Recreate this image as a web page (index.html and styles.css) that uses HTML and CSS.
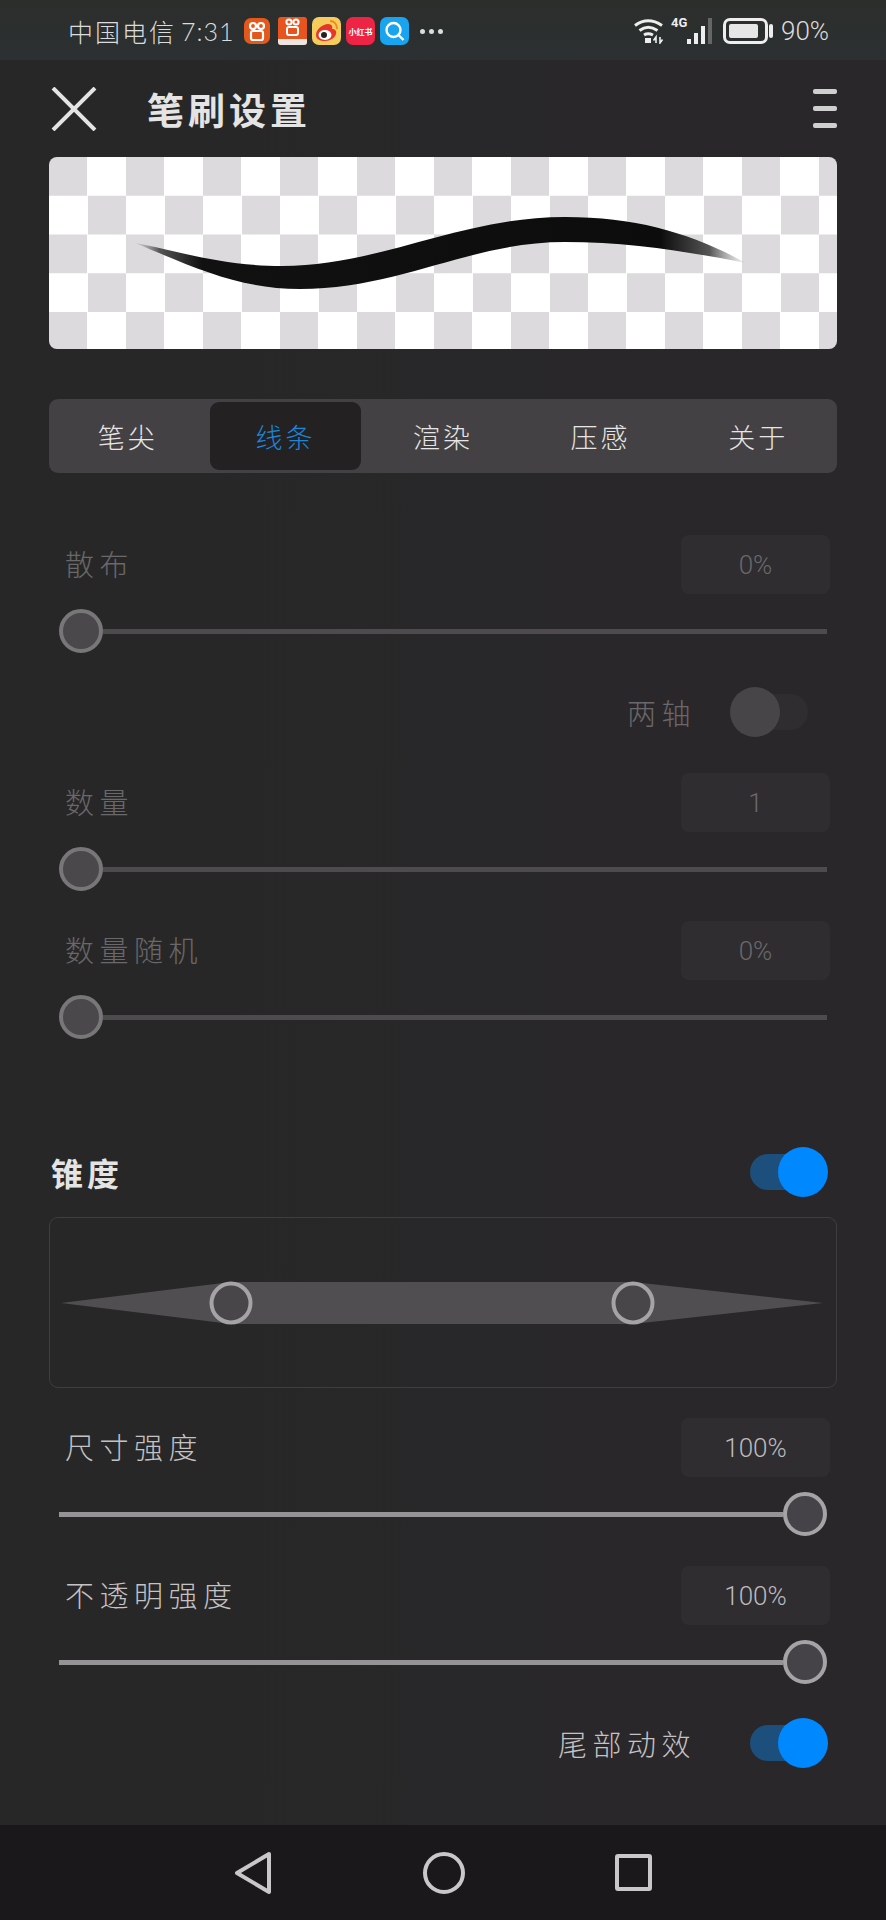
FILE: index.html
```html
<!DOCTYPE html>
<html lang="zh-CN">
<head>
  <meta charset="UTF-8" />
  <meta name="viewport" content="width=device-width, initial-scale=1.0"/>
  <title>笔刷设置</title>
  <link rel="stylesheet" href="styles.css">
</head>
<body>
  <!-- status bar -->
  <div class="statusbar">
    <span class="carrier">中国电信</span>
    <span class="clock">7:31</span>
    <div class="apps">
      <div class="app app-ks">
        <svg width="26" height="26" viewBox="0 0 26 26" fill="none" stroke="#fff" stroke-width="2.2"><circle cx="9" cy="8" r="3"/><circle cx="17" cy="8" r="3"/><rect x="7" y="13" width="12" height="9" rx="2"/></svg>
      </div>
      <div class="app app-ksj">
        <svg width="29" height="20" viewBox="0 0 29 20" fill="none" stroke="#fff" stroke-width="2"><circle cx="11" cy="5" r="2.6"/><circle cx="18" cy="5" r="2.6"/><rect x="9" y="10" width="11" height="8" rx="2"/></svg>
        <span class="app-strip"></span>
      </div>
      <div class="app app-wb">
        <svg width="29" height="28" viewBox="0 0 29 28"><path d="M4 18c0-6 7-11 12-11 4 0 5 3 4 5 3 0 5 2 4 5-1 4-6 7-11 7S4 22 4 18z" fill="#e6352b"/><ellipse cx="13" cy="18" rx="6.5" ry="5" fill="#fff"/><circle cx="12" cy="18" r="3" fill="#222"/><path d="M18 4c4 0 7 3 7 8" fill="none" stroke="#ee8a1c" stroke-width="2"/></svg>
      </div>
      <div class="app app-xhs">小红书</div>
      <div class="app app-search">
        <svg width="29" height="28" viewBox="0 0 29 28" fill="none" stroke="#fff" stroke-width="2.4"><circle cx="13.5" cy="13" r="7"/><path d="M18.5 18l5 5"/></svg>
      </div>
    </div>
    <div class="dots"><i></i><i></i><i></i></div>
    <div class="status-right">
      <svg class="wifi" width="30" height="26" viewBox="0 0 30 26" fill="none" stroke="#eee" stroke-width="3"><path d="M1 7.5Q14-2 28 7.5"/><path d="M5.5 12.5Q14 6 23.5 12.5"/><path d="M10 17Q14 14.500 19 17"/><rect x="11" y="20" width="6" height="5" fill="#eee" stroke="none"/><path d="M22 25v-6l-2.500 3.500M26 19v6l2.500-3.500" stroke-width="1.600"/></svg>
      <span class="net">4G</span>
      <svg class="signal" width="28" height="26" viewBox="0 0 28 26" fill="#eee"><rect x="1" y="21" width="4" height="5"/><rect x="8" y="15" width="4" height="11"/><rect x="15" y="8" width="4" height="18"/><rect x="22" y="0" width="4" height="26" fill="#666"/></svg>
      <div class="battery"><span class="battery-fill"></span></div>
      <span class="battery-cap"></span>
      <span class="percent">90%</span>
    </div>
  </div>

  <main class="page">
    <header class="toolbar">
      <svg class="close" width="46" height="44" viewBox="0 0 46 44" stroke="#e4e4e4" stroke-width="4"><path d="M2 1l42 42M44 1L2 43"/></svg>
      <h1>笔刷设置</h1>
      <div class="menu"><i></i><i></i><i></i></div>
    </header>

    <section class="preview">
      <svg width="788" height="192" viewBox="49 157 788 192">
        <defs>
          <linearGradient id="ink" gradientUnits="userSpaceOnUse" x1="135" y1="0" x2="746" y2="0">
            <stop offset="0" stop-color="#999" stop-opacity="0.2"/>
            <stop offset="0.04" stop-color="#555"/>
            <stop offset="0.11" stop-color="#111"/>
            <stop offset="0.86" stop-color="#0c0c0c"/>
            <stop offset="0.94" stop-color="#555"/>
            <stop offset="1" stop-color="#999" stop-opacity="0.1"/>
          </linearGradient>
        </defs>
        <path fill="url(#ink)" d="M135 243C175 250 220 266 282 266C380 266 460 217 565 217C640 217 695 235 746 263C690 252 630 242 565 242C470 242 400 289 300 289C240 289 195 268 135 243Z"/>
      </svg>
    </section>

    <nav class="tabs">
      <div class="tab">笔尖</div>
      <div class="tab active">线条</div>
      <div class="tab">渲染</div>
      <div class="tab">压感</div>
      <div class="tab">关于</div>
    </nav>

    <div class="setting off first">
      <div class="setting-head"><label>散布</label><span class="value">0%</span></div>
      <div class="slider"><span class="knob"></span><span class="track"></span></div>
    </div>

    <div class="switch-row off">
      <label>两轴</label>
      <div class="toggle"><span class="toggle-knob"></span></div>
    </div>

    <div class="setting off after-switch">
      <div class="setting-head"><label>数量</label><span class="value">1</span></div>
      <div class="slider"><span class="knob"></span><span class="track"></span></div>
    </div>

    <div class="setting off">
      <div class="setting-head"><label>数量随机</label><span class="value">0%</span></div>
      <div class="slider"><span class="knob"></span><span class="track"></span></div>
    </div>

    <div class="section-head">
      <h2>锥度</h2>
      <div class="toggle on"><span class="toggle-knob"></span></div>
    </div>

    <div class="taper">
      <svg width="786" height="169" viewBox="50 1218 786 169">
        <path d="M61 1303L231 1282H633L823 1303L633 1324H231Z" fill="#504e51"/>
        <circle cx="231" cy="1303" r="19.500" fill="#484649" stroke="#a5a3a5" stroke-width="4"/>
        <circle cx="633" cy="1303" r="19.500" fill="#484649" stroke="#a5a3a5" stroke-width="4"/>
      </svg>
    </div>

    <div class="setting">
      <div class="setting-head"><label>尺寸强度</label><span class="value">100%</span></div>
      <div class="slider"><span class="track"></span><span class="knob"></span></div>
    </div>

    <div class="setting">
      <div class="setting-head"><label>不透明强度</label><span class="value">100%</span></div>
      <div class="slider"><span class="track"></span><span class="knob"></span></div>
    </div>

    <div class="switch-row tail">
      <label>尾部动效</label>
      <div class="toggle on"><span class="toggle-knob"></span></div>
    </div>
  </main>

  <!-- android nav buttons -->
  <footer class="navbar">
    <svg width="39" height="44" viewBox="0 0 39 44" fill="none" stroke="#c9c7c9" stroke-width="4" stroke-linejoin="round"><path d="M35 3L3 22l32 19z"/></svg>
    <svg width="44" height="44" viewBox="0 0 44 44" fill="none" stroke="#c9c7c9" stroke-width="4"><circle cx="22" cy="22" r="19"/></svg>
    <svg width="37" height="37" viewBox="0 0 37 37" fill="none" stroke="#c9c7c9" stroke-width="4" stroke-linejoin="round"><rect x="2" y="2" width="33" height="33" rx="1"/></svg>
  </footer>
</body>
</html>
```

FILE: styles.css
```css
* {
  box-sizing: border-box;
}

body {
  margin: 0;
  height: 1920px;
  display: flex;
  flex-direction: column;
  overflow: hidden;
  background: linear-gradient(90deg, #272727, #2a272b);
  font-family: "Noto Sans CJK SC", "Noto Sans", sans-serif;
  color: #c4c2c4;
}

label {
  font-size: 29px;
  font-weight: 300;
  letter-spacing: 5.500px;
  line-height: 40px;
}

/* status bar */
.statusbar {
  height: 60px;
  flex: none;
  display: flex;
  align-items: center;
  padding: 2px 0 0 68px;
  background: linear-gradient(#2b2e2b, #2c3032);
  color: #dcdcdc;
}

.carrier {
  font-size: 25px;
  font-weight: 300;
  letter-spacing: 2px;
  line-height: 30px;
  width: 113px;
}

.clock {
  font-family: "Lato", sans-serif;
  font-size: 25px;
  font-weight: 300;
  letter-spacing: 1px;
  width: 63px;
}

.apps {
  display: flex;
  align-items: center;
  gap: 5px;
}

.app {
  width: 29px;
  height: 28px;
  border-radius: 7px;
  display: flex;
  align-items: center;
  justify-content: center;
  overflow: hidden;
}

.app-ks {
  width: 26px;
  height: 26px;
  margin-right: 3px;
  background: #e5581c;
}

.app-ksj {
  flex-direction: column;
  justify-content: flex-start;
  background: #e8541e;
  border-radius: 3px;
}

.app-strip {
  width: 100%;
  height: 6px;
  margin-top: 2px;
  background: #efe6e0;
}

.app-wb {
  background: #f6cd5c;
}

.app-xhs {
  background: #ee2444;
  color: #fff;
  font-size: 8px;
  font-weight: 700;
  white-space: nowrap;
}

.app-search {
  background: #18a4ee;
}

.dots {
  display: flex;
  gap: 4px;
  margin-left: 11px;
}

.dots i {
  width: 5px;
  height: 5px;
  border-radius: 50%;
  background: #ddd;
}

.status-right {
  margin-left: auto;
  margin-right: 59px;
  display: flex;
  align-items: center;
}

.net {
  align-self: flex-start;
  margin: 0 0 0 7px;
  font-family: "Roboto", sans-serif;
  font-size: 13px;
  font-weight: 700;
  line-height: 14px;
  color: #eee;
  width: 15px;
}

.signal {
  margin-right: 9px;
}

.battery {
  width: 45px;
  height: 26px;
  padding: 3px;
  border: 3px solid #eee;
  border-radius: 7px;
  display: flex;
}

.battery-fill {
  flex: 1;
  background: #e6e6e6;
  border-radius: 2px;
  margin-right: 4px;
}

.battery-cap {
  width: 4px;
  height: 14px;
  margin-left: 1px;
  background: #eee;
  border-radius: 2px;
}

.percent {
  margin-left: 8px;
  width: 46px;
  font-family: "Roboto", sans-serif;
  font-size: 26px;
  font-weight: 300;
  white-space: nowrap;
  color: #dcdcdc;
}

/* main column */
.page {
  flex: 1;
  padding: 0 49px;
}

.toolbar {
  height: 97px;
  display: flex;
  align-items: center;
  padding-left: 2px;
}

.close {
  flex: none;
}

.toolbar h1 {
  margin: 0 0 0 50px;
  font-size: 37px;
  font-weight: 700;
  letter-spacing: 4px;
  color: #e4e4e4;
}

.menu {
  margin-left: auto;
  display: flex;
  flex-direction: column;
  gap: 12px;
}

.menu i {
  display: block;
  width: 24px;
  height: 5px;
  border-radius: 2px;
  background: #cfcfcf;
}

.preview {
  height: 192px;
  border-radius: 8px;
  overflow: hidden;
  background-color: #fff;
  background-image: conic-gradient(#fff 25%, #dcdadd 0 50%, #fff 0 75%, #dcdadd 0);
  background-size: 77px 77.500px;
}

.preview svg {
  display: block;
}

.tabs {
  height: 74px;
  margin-top: 50px;
  padding: 3px 0;
  display: grid;
  grid-template-columns: repeat(5, 1fr);
  border-radius: 9px;
  background: #444144;
}

.tab {
  display: flex;
  align-items: center;
  justify-content: center;
  font-size: 27px;
  font-weight: 300;
  letter-spacing: 3px;
  color: #e6e6e6;
}

.tab.active {
  margin: 0 3px;
  border-radius: 9px;
  background: #232122;
  color: #1b86d8;
}

/* slider rows */
.setting {
  margin-top: 30px;
}

.setting.first {
  margin-top: 62px;
}

.setting.after-switch {
  margin-top: 36px;
}

.setting-head {
  height: 59px;
  padding: 0 7px 0 16px;
  display: flex;
  align-items: center;
  justify-content: space-between;
}

.setting-head label {
  padding-bottom: 4px;
}

.value {
  width: 149px;
  height: 59px;
  border-radius: 8px;
  background: #2f2d30;
  display: flex;
  align-items: center;
  justify-content: center;
  font-family: "Roboto", sans-serif;
  font-size: 26px;
  font-weight: 300;
  color: #bdbbbd;
}

.slider {
  height: 44px;
  margin: 15px 10px 0;
  display: flex;
  align-items: center;
}

.track {
  flex: 1;
  height: 5px;
  background: #959395;
}

.knob {
  flex: none;
  width: 44px;
  height: 44px;
  border: 4px solid #a5a3a5;
  border-radius: 50%;
  background: #454347;
}

.off label,
.off .value {
  color: #6a686a;
}

.off .track {
  background: #4d4b4d;
}

.off .knob {
  border-color: #787678;
  background: #4a484a;
}

/* toggles */
.switch-row {
  height: 50px;
  margin-top: 34px;
  padding-right: 29px;
  display: flex;
  align-items: center;
  justify-content: flex-end;
  gap: 40px;
}

.switch-row.tail {
  padding-right: 15px;
  gap: 54px;
}

.toggle {
  width: 72px;
  height: 36px;
  border-radius: 18px;
  display: flex;
  align-items: center;
  background: #2f2d30;
}

.toggle-knob {
  flex: none;
  width: 50px;
  height: 50px;
  margin-left: -6px;
  border-radius: 50%;
  background: #484548;
}

.toggle.on {
  justify-content: flex-end;
  background: #1d4f7c;
}

.toggle.on .toggle-knob {
  margin: 0 -6px 0 0;
  background: #0088ff;
}

.section-head {
  height: 50px;
  margin-top: 108px;
  padding: 0 15px 0 2px;
  display: flex;
  align-items: center;
  justify-content: space-between;
}

.section-head h2 {
  margin: 0;
  font-size: 32px;
  font-weight: 700;
  letter-spacing: 4px;
  color: #e4e4e4;
}

.taper {
  height: 171px;
  margin-top: 20px;
  border: 1px solid #3f3d3f;
  border-radius: 9px;
}

.taper svg {
  display: block;
}

.navbar {
  height: 95px;
  flex: none;
  background: #1a181b;
  display: flex;
  align-items: center;
  padding-left: 234px;
  gap: 149px;
}
```
